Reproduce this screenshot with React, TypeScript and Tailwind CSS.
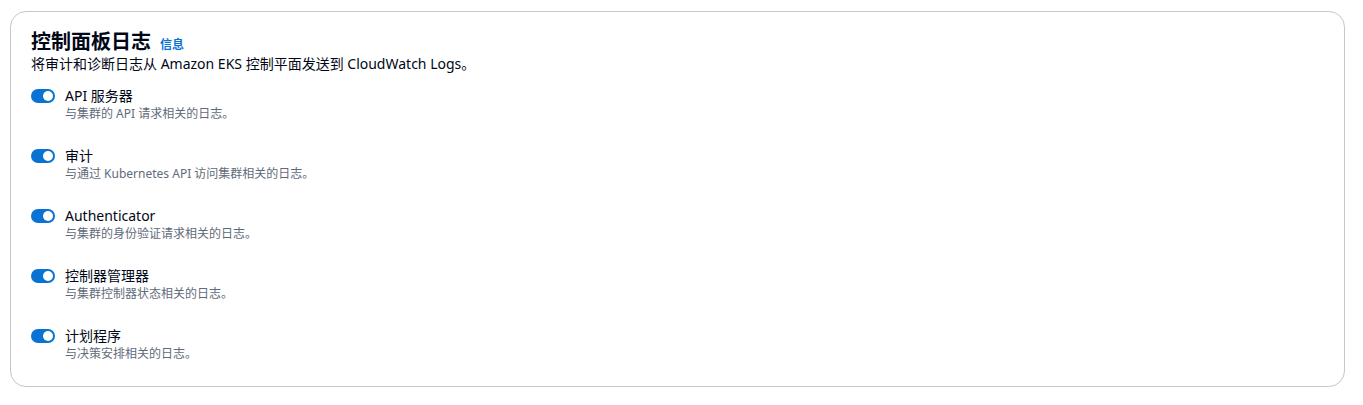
import { useState } from 'react'

const LOGS = [
  { label: 'API 服务器', desc: '与集群的 API 请求相关的日志。' },
  { label: '审计', desc: '与通过 Kubernetes API 访问集群相关的日志。' },
  { label: 'Authenticator', desc: '与集群的身份验证请求相关的日志。' },
  { label: '控制器管理器', desc: '与集群控制器状态相关的日志。' },
  { label: '计划程序', desc: '与决策安排相关的日志。' },
]

function Toggle({ on, onClick }: { on: boolean; onClick: () => void }) {
  return (
    <button
      type="button"
      onClick={onClick}
      className={`relative mt-[3px] h-[14px] w-[24px] shrink-0 rounded-full ${on ? 'bg-[#0972d3]' : 'bg-[#8c8c94]'}`}
    >
      <span
        className={`absolute top-[2px] h-[10px] w-[10px] rounded-full bg-white ${on ? 'left-[12px]' : 'left-[2px]'}`}
      />
    </button>
  )
}

export default function App() {
  const [state, setState] = useState(LOGS.map(() => true))

  return (
    <div
      className="bg-white pt-[11px] pl-[10px] pr-[18px] pb-[19px] text-[#000716]"
      style={{ fontFamily: "'Noto Sans', 'Noto Sans CJK SC', sans-serif" }}
    >
      <div className="rounded-[16px] border border-[#c6c6cd] pl-[20px] pr-[21px] pt-[18px] pb-[24px]">
        {/* Header */}
        <div className="flex items-baseline gap-[9px]">
          <h2 className="text-[20px] leading-[24px] font-bold">控制面板日志</h2>
          <a href="#" className="text-[12px] font-bold text-[#0972d3]">信息</a>
        </div>
        <p className="text-[14px] leading-[20px]">
          将审计和诊断日志从 Amazon EKS 控制平面发送到 CloudWatch Logs。
        </p>

        {/* Toggles */}
        <div className="mt-[12px] flex flex-col gap-[24px]">
          {LOGS.map((l, i) => (
            <div key={l.label} className="flex gap-[10px] items-start">
              <Toggle on={state[i]} onClick={() => setState(s => s.map((v, j) => (j === i ? !v : v)))} />
              <div>
                <div className="text-[14px] leading-[20px]">{l.label}</div>
                <div className="text-[12px] leading-[16px] text-[#5f6b7a]">{l.desc}</div>
              </div>
            </div>
          ))}
        </div>
      </div>
    </div>
  )
}
